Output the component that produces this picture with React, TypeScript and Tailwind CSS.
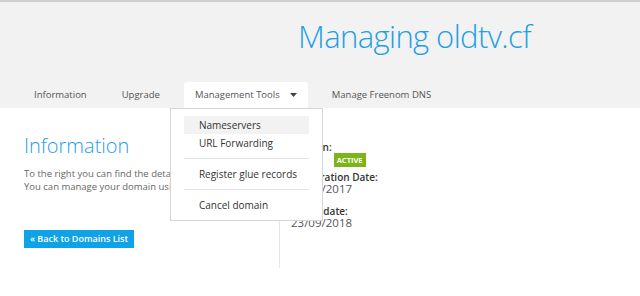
const font = { fontFamily: '"Open Sans", "Liberation Sans", sans-serif' };

const tabs = ["Information", "Upgrade", "Management Tools", "Manage Freenom DNS"];

function Caret() {
  return (
    <svg width="7" height="4" viewBox="0 0 7 4" className="ml-[10px]">
      <path d="M0 0h7L3.5 4z" fill="#444" />
    </svg>
  );
}

function ToolsMenu() {
  return (
    <div className="absolute left-[-14px] top-[26px] z-10 w-[153px] border border-[#d6d6d6] bg-white px-[13px] pb-[6px] pt-[7px] text-[10px] text-[#333]">
      <div className="flex h-[18px] items-center bg-[#f2f2f2] pl-[15px]">Nameservers</div>
      <div className="flex h-[18px] items-center pl-[15px]">URL Forwarding</div>
      <div className="my-[6px] h-px bg-[#e3e3e3]" />
      <div className="flex h-[18px] items-center pl-[15px]">Register glue records</div>
      <div className="my-[6px] h-px bg-[#e3e3e3]" />
      <div className="flex h-[18px] items-center pl-[15px]">Cancel domain</div>
    </div>
  );
}

export default function App() {
  return (
    <div className="h-[296px] w-[640px] overflow-hidden bg-white" style={font}>
      <header className="border-t-2 border-[#cfcfcf] bg-[#f2f2f2]">
        <h1 className="pl-[298px] pt-[14px] text-[31px] font-light leading-[40px] tracking-[-0.6px] text-[#1ea0e3]">
          Managing oldtv.cf
        </h1>
        <nav className="mt-[26px] flex gap-[13px] pl-[23px] text-[9.5px] text-[#555]">
          {tabs.map((tab) =>
            tab === "Management Tools" ? (
              <div key={tab} className="relative flex h-[26px] items-center rounded-t-[3px] bg-white px-[11px]">
                {tab}
                <Caret />
                <ToolsMenu />
              </div>
            ) : (
              <div key={tab} className="flex h-[26px] items-center px-[11px]">
                {tab}
              </div>
            )
          )}
        </nav>
      </header>

      <main className="flex px-[24px]">
        <section className="w-[255px] shrink-0 pt-[26px]">
          <h2 className="text-[20px] font-light leading-[24px] text-[#1ea0e3]">Information</h2>
          <p className="mt-[9px] whitespace-nowrap text-[9.5px] leading-[13px] text-[#666]">
            To the right you can find the details of your domain.
            <br />
            You can manage your domain using the tabs above.
          </p>
          <button className="mt-[37px] flex h-[18px] items-center bg-[#0ea2e6] px-[6px] text-[9px] font-semibold text-white">
            « Back to Domains List
          </button>
        </section>

        <section className="mt-[20px] h-[140px] border-l border-[#e6e6e6] pl-[11px] pt-[13px] text-[11px] leading-[12px]">
          <div className="text-[10px] font-semibold text-[#333]">Domain:</div>
          <div className="flex h-[14px] items-center gap-[12px] text-[9px] text-[#555]">
            <span>oldtv.cf</span>
            <span className="flex h-[14px] w-[32px] items-center justify-center bg-[#7cb518] text-[7.5px] font-bold text-white">
              ACTIVE
            </span>
          </div>
          <div className="mt-[4px] text-[10px] font-semibold text-[#333]">Registration Date:</div>
          <div className="text-[11.5px] text-[#555]">23/09/2017</div>
          <div className="mt-[10px] text-[10px] font-semibold text-[#333]">Expiry date:</div>
          <div className="text-[11.5px] text-[#555]">23/09/2018</div>
        </section>
      </main>
    </div>
  );
}
